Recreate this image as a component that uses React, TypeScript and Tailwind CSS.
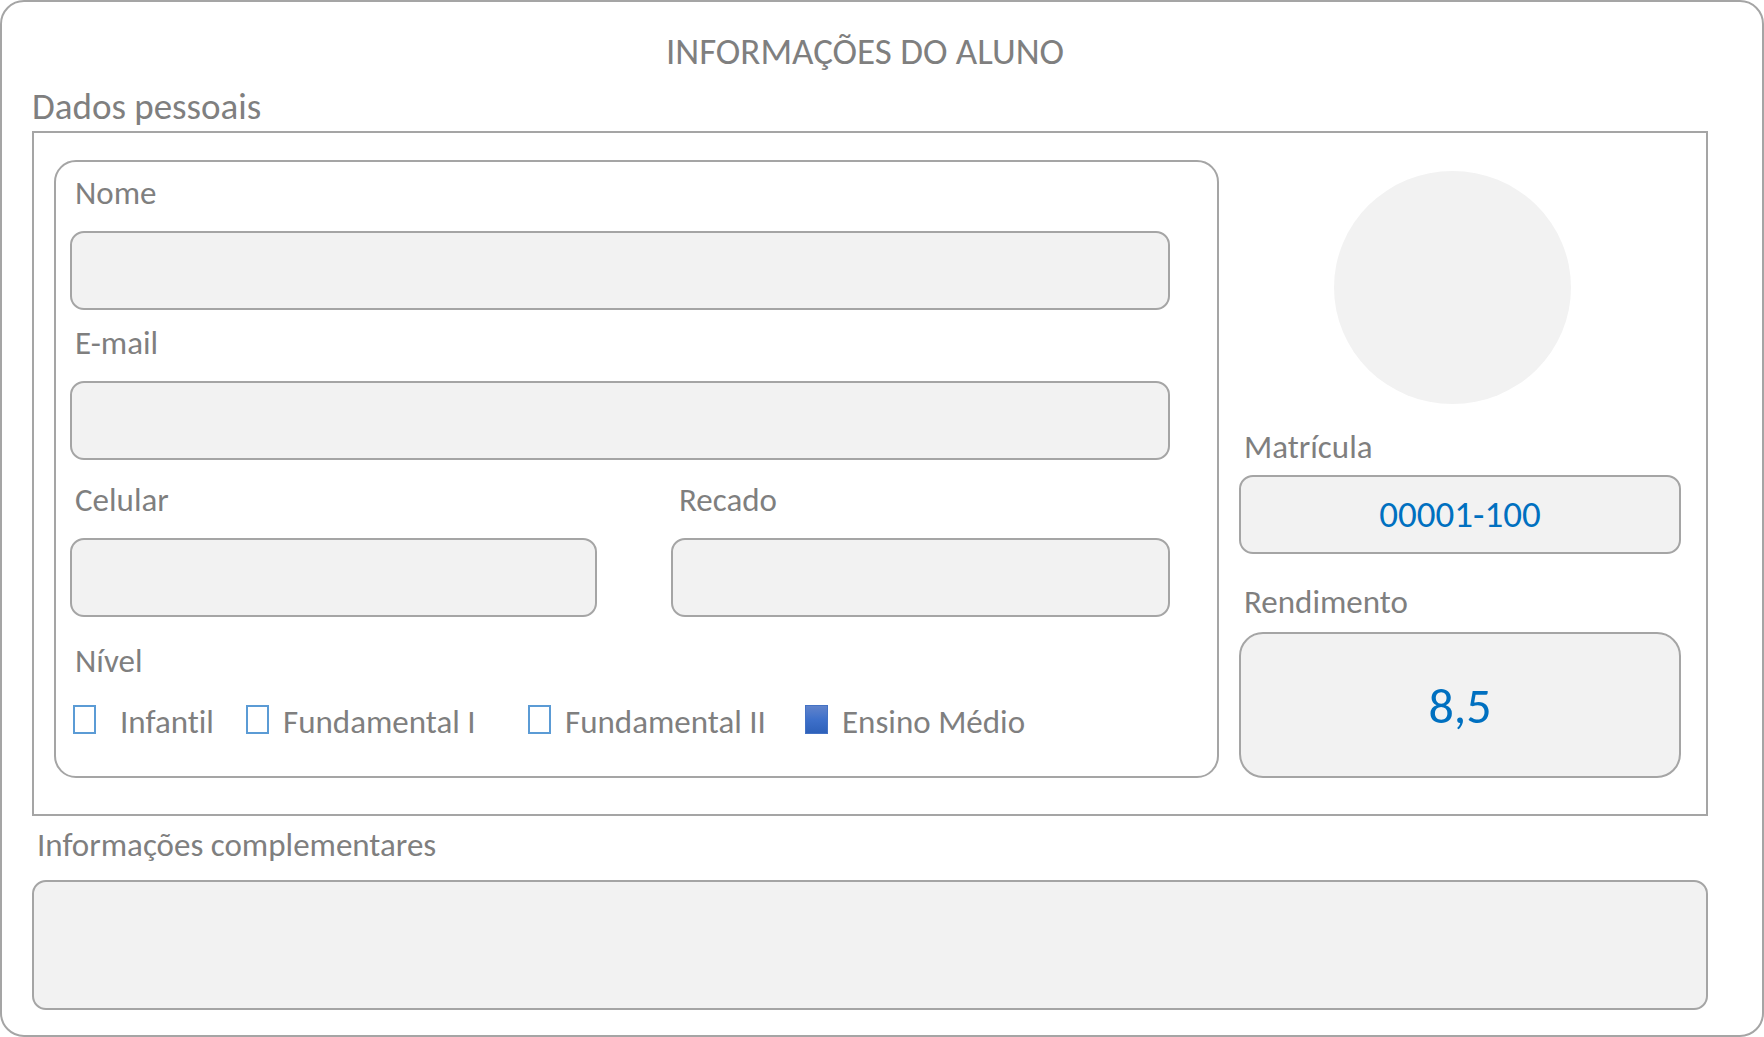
import { ReactNode, useState } from "react";

const labelClass = "block text-[33px] leading-9";
const boxClass =
  "block w-full rounded-[14px] border-2 border-[#a5a5a5] bg-[#f2f2f2] px-4 outline-none focus:border-[#5b9bd5]";

function Field({
  id,
  label,
  type = "text",
  indent = "pl-[5px]",
}: {
  id: string;
  label: string;
  type?: string;
  indent?: string;
}) {
  return (
    <div className="flex min-w-0 flex-col gap-5">
      <label htmlFor={id} className={`${labelClass} ${indent}`}>
        {label}
      </label>
      <input id={id} name={id} type={type} className={`${boxClass} h-[79px] text-[33px]`} />
    </div>
  );
}

function Level({
  id,
  checked,
  onChange,
  children,
  className,
}: {
  id: string;
  checked: boolean;
  onChange: () => void;
  children: ReactNode;
  className: string;
}) {
  return (
    <div className={`flex items-start whitespace-nowrap ${className}`}>
      <input
        id={id}
        type="checkbox"
        checked={checked}
        onChange={onChange}
        className="mt-px h-[29px] w-[23px] shrink-0 appearance-none border-2 border-[#5b9bd5] bg-white checked:border checked:border-[#4472c4] checked:bg-linear-to-b checked:from-[#6083cb] checked:via-[#3e70ca] checked:to-[#2e61ba]"
      />
      <label htmlFor={id} className={labelClass}>
        {children}
      </label>
    </div>
  );
}

const levels = [
  { id: "infantil", label: "Infantil", gap: "gap-6" },
  { id: "fundamental-1", label: "Fundamental I", gap: "gap-3.5" },
  { id: "fundamental-2", label: "Fundamental II", gap: "gap-3.5" },
  { id: "medio", label: "Ensino Médio", gap: "gap-3.5" },
];

export default function App() {
  const [selected, setSelected] = useState<string[]>(["medio"]);
  const toggle = (id: string) =>
    setSelected((s) => (s.includes(id) ? s.filter((x) => x !== id) : [...s, id]));

  return (
    <form className="min-h-screen rounded-3xl border-2 border-[#a5a5a5] bg-white pt-[30px] pr-[54px] pb-[25px] pl-[30px] font-[Carlito,Lato,sans-serif] text-[#7f7f7f] [font-variant-ligatures:none]">
      <h1 className="pr-2.5 text-center text-[37px] leading-10">INFORMAÇÕES DO ALUNO</h1>
      <h2 className="mt-[15px] text-[37px] leading-10">Dados pessoais</h2>

      <section className="mt-1 grid grid-cols-[1165fr_442fr] gap-5 border-2 border-[#a5a5a5] pt-[27px] pr-[25px] pb-9 pl-5">
        <div className="rounded-[22px] border-2 border-[#a5a5a5] pt-[13px] pr-[47px] pb-9 pl-3.5">
          <Field id="nome" label="Nome" />
          <div className="mt-[15px]">
            <Field id="email" label="E-mail" type="email" />
          </div>
          <div className="mt-[22px] grid grid-cols-[527fr_499fr] gap-[74px]">
            <Field id="celular" label="Celular" type="tel" />
            <Field id="recado" label="Recado" type="tel" indent="pl-2" />
          </div>
          <fieldset className="mt-[26px]">
            <legend className={`${labelClass} pl-[5px]`}>Nível</legend>
            <div className="mt-[25px] grid grid-cols-[173fr_282fr_277fr_365fr] pl-[3px]">
              {levels.map((l) => (
                <Level
                  key={l.id}
                  id={l.id}
                  checked={selected.includes(l.id)}
                  onChange={() => toggle(l.id)}
                  className={l.gap}
                >
                  {l.label}
                </Level>
              ))}
            </div>
          </fieldset>
        </div>

        <div className="flex min-w-0 flex-col pt-[11px]">
          <div className="mr-4 h-[233px] w-[237px] self-center rounded-[50%] bg-[#f2f2f2]" />
          <label htmlFor="matricula" className={`${labelClass} mt-[25px] pl-[5px]`}>
            Matrícula
          </label>
          <input
            id="matricula"
            defaultValue="00001-100"
            className={`${boxClass} mt-2.5 h-[79px] text-center text-[37px] text-[#0070c0]`}
          />
          <label htmlFor="rendimento" className={`${labelClass} mt-[30px] pl-[5px]`}>
            Rendimento
          </label>
          <input
            id="rendimento"
            defaultValue="8,5"
            className="mt-3 block h-[146px] w-full rounded-3xl border-2 border-[#a5a5a5] bg-[#f2f2f2] px-4 text-center text-[50px] text-[#0070c0] outline-none focus:border-[#5b9bd5]"
          />
        </div>
      </section>

      <label htmlFor="complementares" className={`${labelClass} mt-[11px] pl-[5px]`}>
        Informações complementares
      </label>
      <textarea
        id="complementares"
        className={`${boxClass} mt-[17px] h-[130px] resize-none py-3 text-[33px]`}
      />
    </form>
  );
}
